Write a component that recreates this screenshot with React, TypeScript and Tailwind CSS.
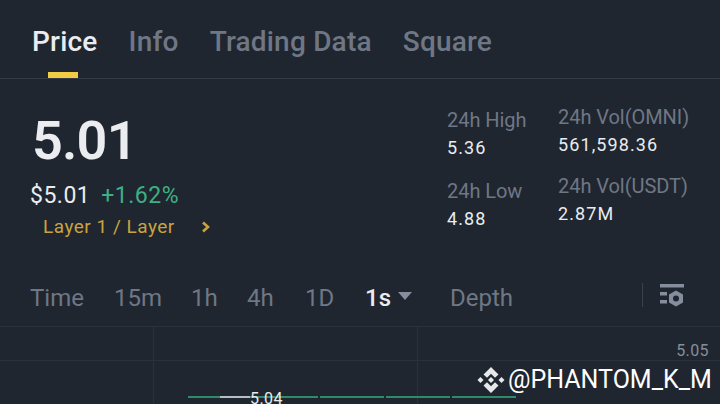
const TABS = [
  { label: 'Price', active: true },
  { label: 'Info', active: false },
  { label: 'Trading Data', active: false },
  { label: 'Square', active: false },
];

const INTERVALS = [
  { label: 'Time', width: 'w-[84px]' },
  { label: '15m', width: 'w-[77px]' },
  { label: '1h', width: 'w-[56px]' },
  { label: '4h', width: 'w-[58px]' },
  { label: '1D', width: 'w-[60px]' },
];

const CANDLES = [
  { left: 'left-[188px]', width: 'w-[130px]' },
  { left: 'left-[320px]', width: 'w-[64px]' },
  { left: 'left-[386px]', width: 'w-[64px]' },
  { left: 'left-[452px]', width: 'w-[64px]' },
];

function Stat({ label, value }: { label: string; value: string }) {
  return (
    <div>
      <div className="text-[20px] leading-[26px] tracking-[-0.05px] text-[#6f7785]">{label}</div>
      <div className="mt-[3px] text-[18px] leading-[24px] tracking-[1.1px] text-[#eaecef]">{value}</div>
    </div>
  );
}

function SettingsIcon() {
  return (
    <svg width="26" height="26" viewBox="0 0 26 26" className="text-[#848e9c]" fill="currentColor">
      <rect x="1" y="1" width="24" height="3.500" />
      <rect x="1" y="9" width="7" height="3.500" />
      <rect x="1" y="17" width="7" height="3.500" />
      <path
        fillRule="evenodd"
        d="M17 7.500l7 4v8l-7 4-7-4v-8zM17 12.500a3 3 0 1 0 0 6 3 3 0 0 0 0-6z"
      />
    </svg>
  );
}

function BinanceMark() {
  return (
    <svg width="28" height="28" viewBox="0 0 28 28" fill="#e6e8ea">
      <path d="M14 1l7.500 7.500-3.500 3.300L14 7.800l-4 4-3.500-3.300z" />
      <path d="M14 27l7.500-7.500-3.500-3.300-4 4-4-4-3.500 3.300z" />
      <path d="M3.500 11L6.500 14 3.500 17 .5 14z" />
      <path d="M24.500 11L27.500 14 24.500 17 21.500 14z" />
      <path d="M14 11L17 14 14 17 11 14z" />
    </svg>
  );
}

export default function App() {
  return (
    <div className="h-[404px] w-[720px] overflow-hidden bg-[#1f2630] font-['Roboto','Noto_Sans',sans-serif]">
      <nav className="flex h-[79px] gap-[31px] border-b border-[#343b46] pl-8">
        {TABS.map((tab) => (
          <div key={tab.label} className="relative pt-[24px]">
            <span
              className={`text-[28px] leading-[36px] font-medium tracking-[0.2px] ${
                tab.active ? 'text-[#eaecef]' : 'text-[#6f7785]'
              }`}
            >
              {tab.label}
            </span>
            {tab.active && (
              <div className="absolute bottom-0 left-4 h-[6px] w-[30px] bg-[#f0cd45]" />
            )}
          </div>
        ))}
      </nav>

      <section className="flex h-[186px] justify-between pl-8">
        <div>
          <div className="mt-[29px] text-[54px] leading-[66px] font-semibold tracking-[-0.8px] text-[#eaecef]">
            5.01
          </div>
          <div className="mt-[7px] -ml-[2px] flex gap-[11px] text-[23px] leading-[30px] tracking-[0.5px]">
            <span className="text-[#eaecef]">$5.01</span>
            <span className="text-[#3eaf85]">+1.62%</span>
          </div>
          <div className="mt-[3px] ml-[11px] flex items-center text-[19px] leading-[26px] tracking-[0.5px] text-[#c9a33e]">
            <span className="w-[158px]">Layer 1 / Layer</span>
            <svg width="10" height="12" viewBox="0 0 10 12" fill="none" stroke="currentColor" strokeWidth="2.600">
              <path d="M2 1.500L7 6 2 10.500" />
            </svg>
          </div>
        </div>

        <div className="flex pt-[25px]">
          <div className="w-[111px] pt-[3px]">
            <Stat label="24h High" value="5.36" />
            <div className="mt-[18px]">
              <Stat label="24h Low" value="4.88" />
            </div>
          </div>
          <div className="w-[162px]">
            <Stat label="24h Vol(OMNI)" value="561,598.36" />
            <div className="mt-[16px]">
              <Stat label="24h Vol(USDT)" value="2.87M" />
            </div>
          </div>
        </div>
      </section>

      <div className="flex h-[62px] items-center border-b border-[#2a313b] pt-[4px] pl-[30px] text-[24px] text-[#6f7785]">
        {INTERVALS.map((item) => (
          <span key={item.label} className={item.width}>
            {item.label}
          </span>
        ))}
        <span className="w-[85px] font-medium text-[#eaecef]">
          1s
          <span className="ml-[7px] inline-block h-0 w-0 -translate-y-[6px] border-x-[7px] border-t-[8px] border-x-transparent border-t-[#848e9c]" />
        </span>
        <span className="w-[192px]">Depth</span>
        <div className="h-[24px] w-px -translate-y-[3px] bg-[#3a414c]" />
        <div className="ml-4 -translate-y-[2px]">
          <SettingsIcon />
        </div>
      </div>

      <div className="relative h-[77px]">
        <div className="absolute top-0 left-[153px] h-full w-px bg-[#2a313b]" />
        <div className="absolute top-0 left-[417px] h-full w-px bg-[#2a313b]" />
        <div className="absolute top-[33px] left-0 h-px w-full bg-[#2a313b]" />
        <span className="absolute top-[14px] right-[11px] text-[16px] leading-[20px] tracking-[0.4px] text-[#848e9c]">
          5.05
        </span>
        {CANDLES.map((c) => (
          <div key={c.left} className={`absolute top-[69px] h-[2px] bg-[#2e8b67] ${c.left} ${c.width}`} />
        ))}
        <div className="absolute top-[69px] left-[220px] h-[2px] w-[30px] bg-[#b7bdc6]" />
        <span className="absolute top-[62px] left-[250px] text-[16px] leading-[20px] tracking-[0.4px] text-[#eaecef]">
          5.04
        </span>
        <div className="absolute top-[38px] left-[477px] flex items-center gap-[3px] text-[25px] leading-[30px] text-white">
          <BinanceMark />
          <span>@PHANTOM_K_M</span>
        </div>
      </div>
    </div>
  );
}
